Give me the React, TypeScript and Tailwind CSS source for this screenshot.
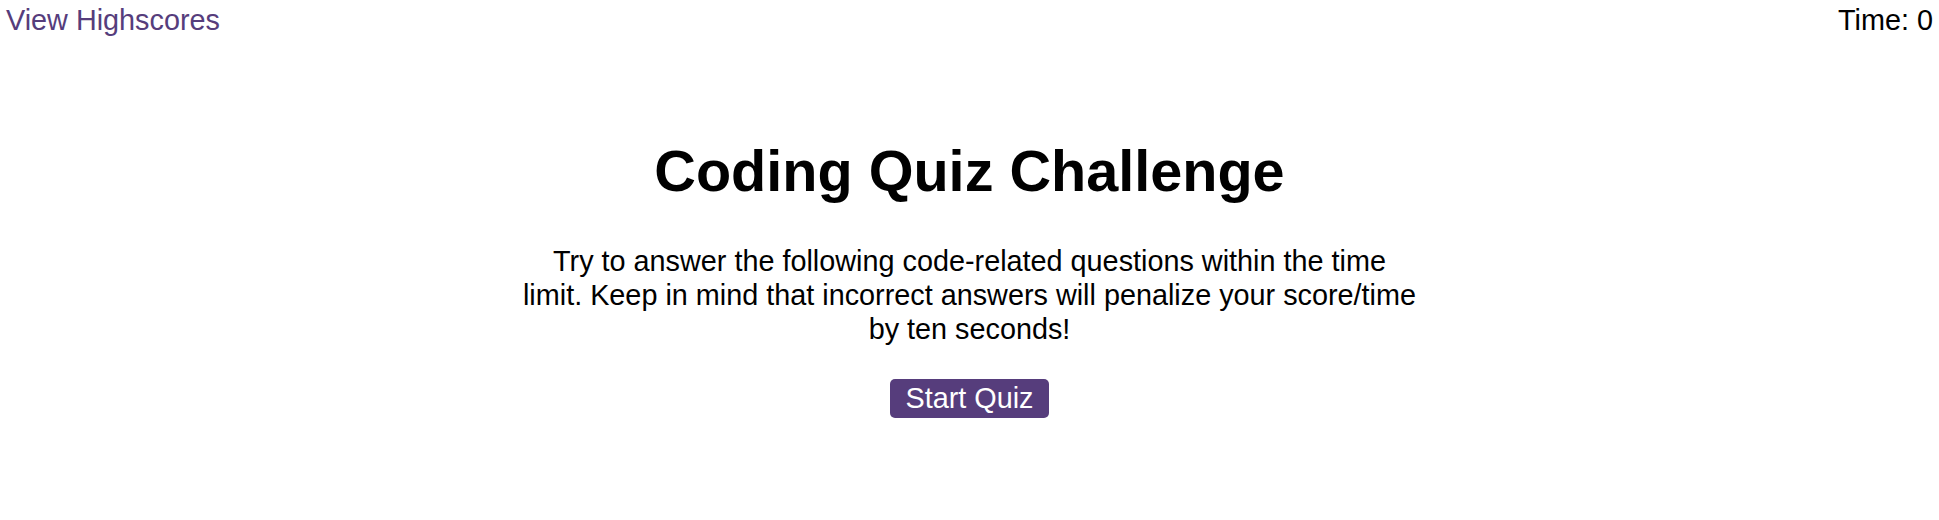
export default function App() {
  return (
    <div className="min-h-screen bg-white text-black font-['Liberation_Sans',Arial,sans-serif] text-[28.8px]">
      {/* top bar */}
      <header className="flex items-start justify-between px-[6px] pt-[4px] leading-[normal]">
        <a href="#" className="text-[#563d7c]">
          View Highscores
        </a>
        <p>Time: 0</p>
      </header>

      <main className="flex flex-col items-center text-center">
        <h1 className="mt-[101px] text-[57.6px] font-bold leading-[normal]">Coding Quiz Challenge</h1>
        <p className="mt-[40px] w-[896px] leading-[34px]">
          Try to answer the following code-related questions within the time limit. Keep in mind that
          incorrect answers will penalize your score/time by ten seconds!
        </p>
        <button className="mt-[33px] rounded-[5px] bg-[#563d7c] px-[15px] py-[3px] leading-[normal] text-white">
          Start Quiz
        </button>
      </main>
    </div>
  )
}
